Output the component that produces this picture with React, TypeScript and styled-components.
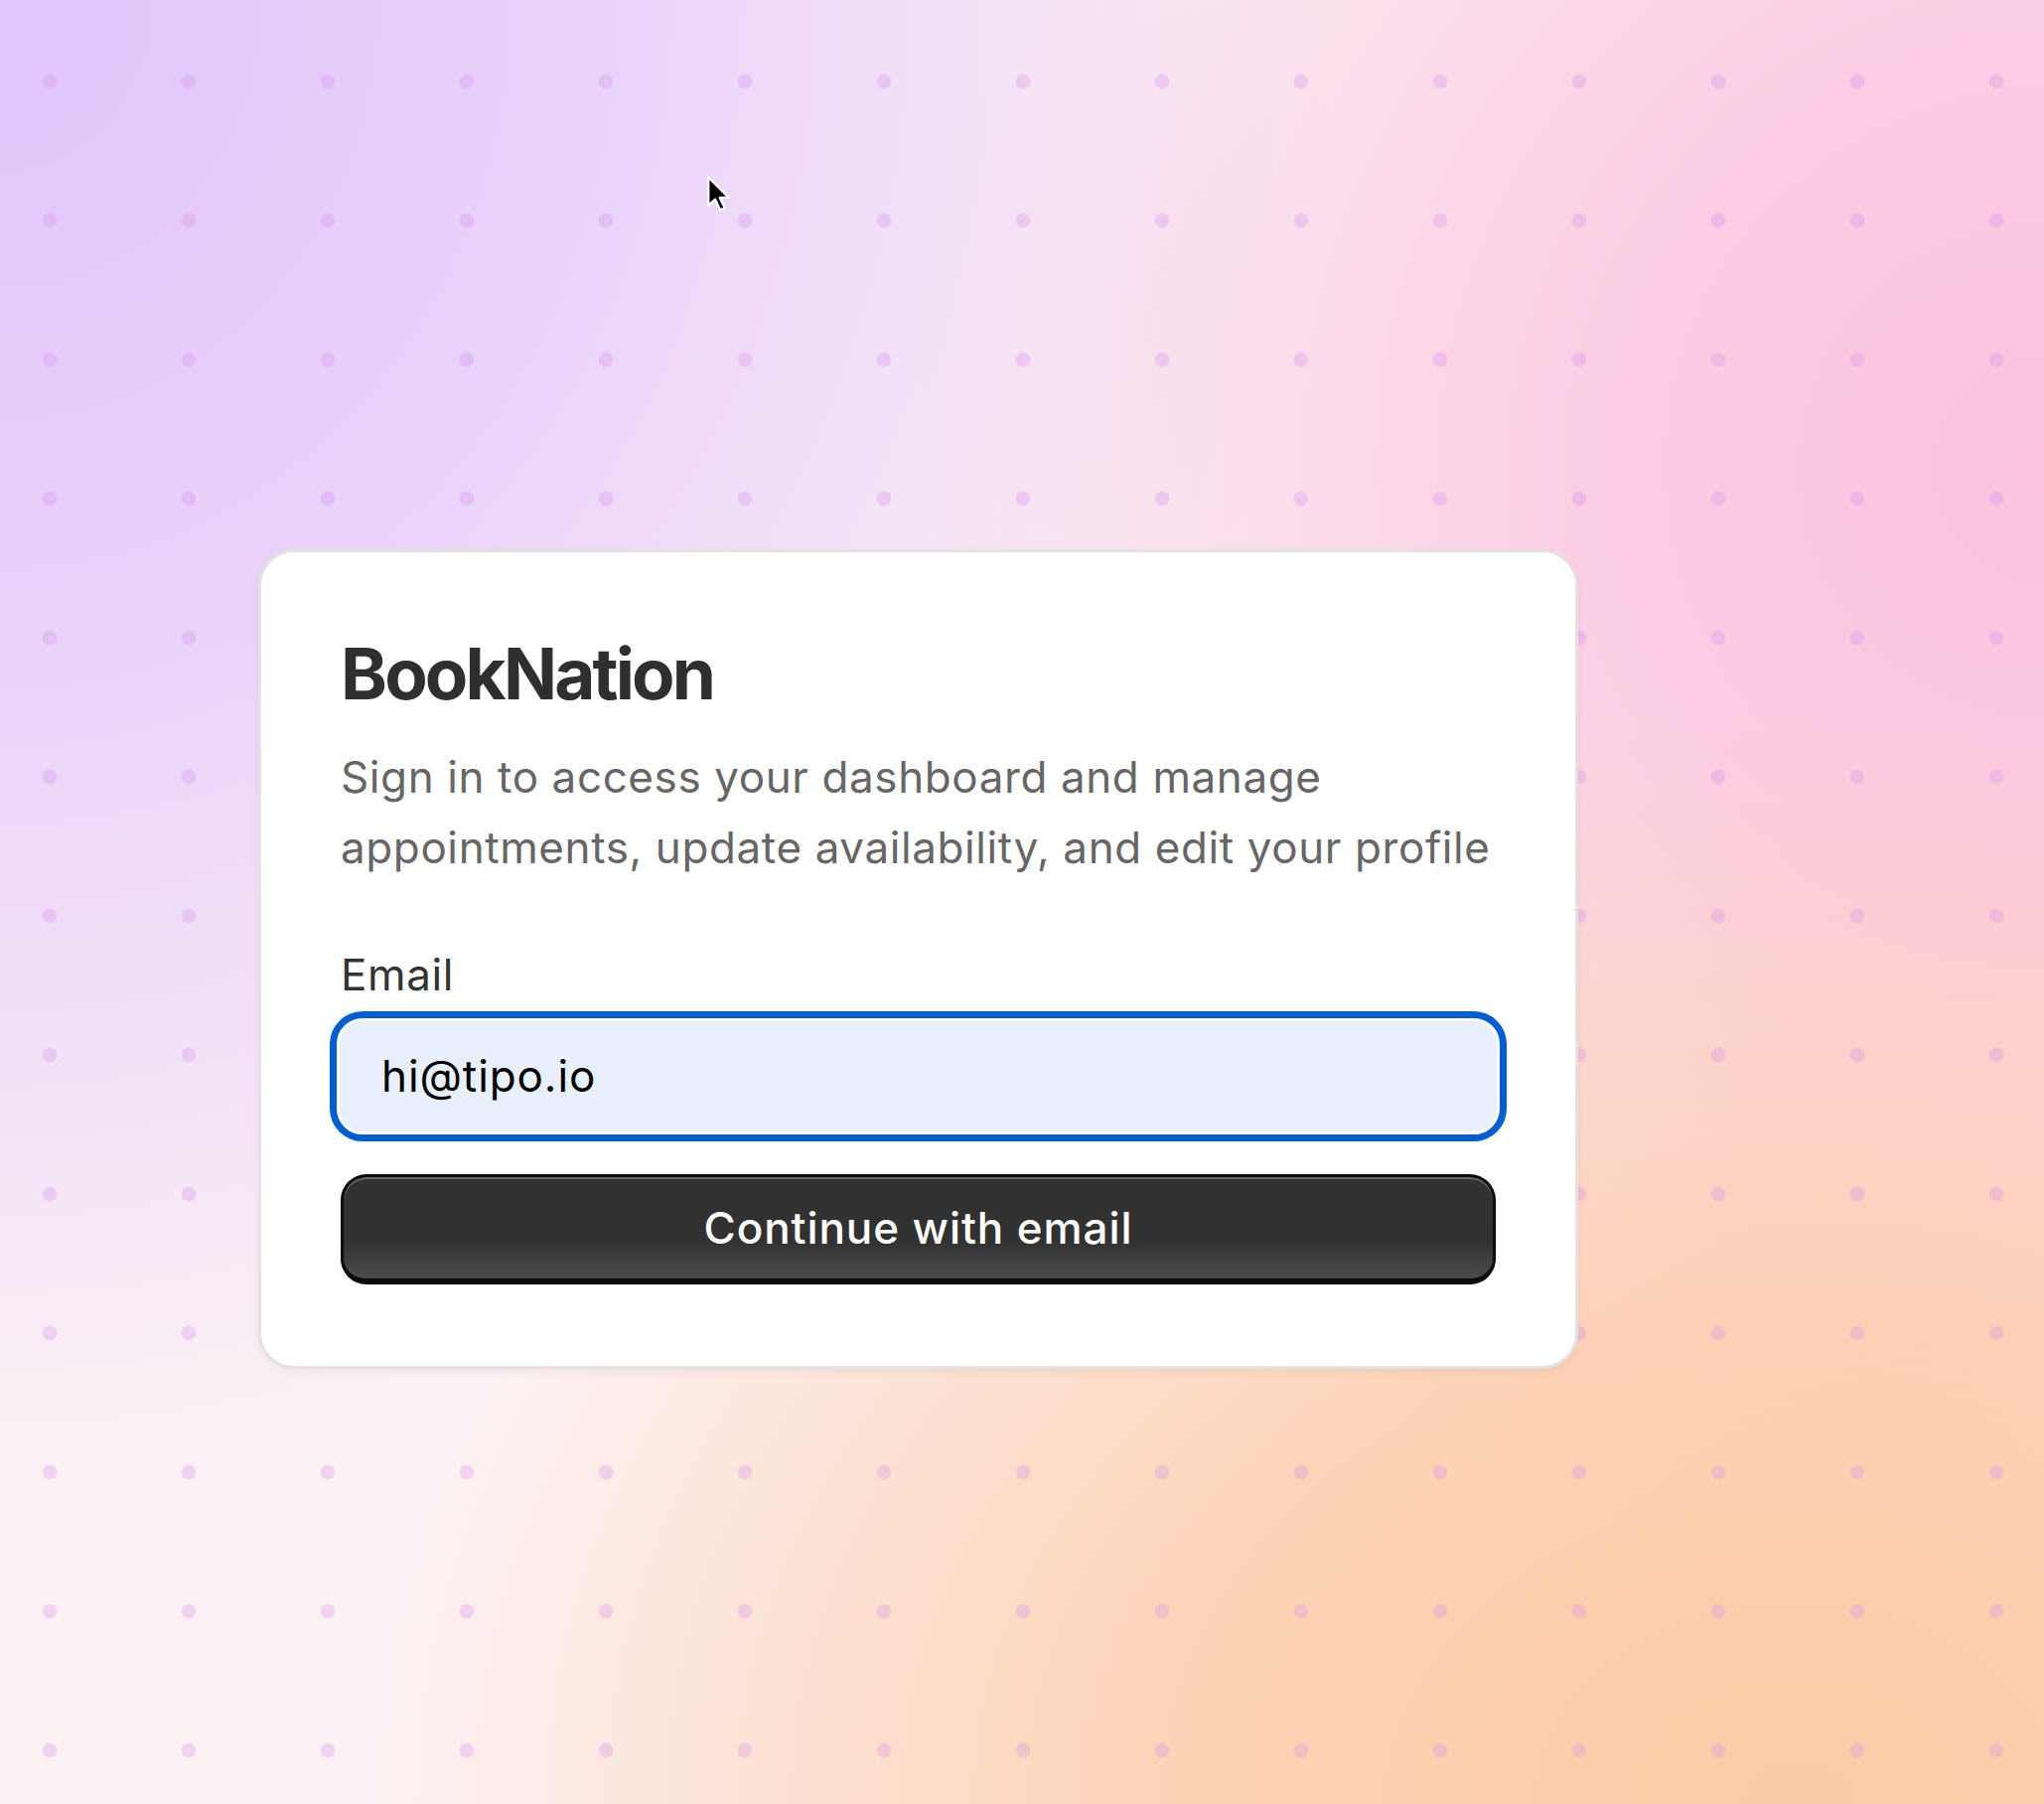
import styled, { createGlobalStyle } from 'styled-components'

const GlobalStyle = createGlobalStyle`
  html, body {
    margin: 0;
    padding: 0;
  }

  body {
    font-family: Inter, "Noto Sans", "Liberation Sans", sans-serif;
    -webkit-font-smoothing: antialiased;
  }
`

const Page = styled.main`
  position: relative;
  box-sizing: border-box;
  min-height: 1816px;
  padding: 553px 0 0 260px;
  overflow: hidden;
  background:
    radial-gradient(circle, rgba(214, 140, 236, 0.3) 7px, rgba(214, 140, 236, 0) 7.6px) -20px 12px / 140px 140px,
    radial-gradient(ellipse 1450px 1100px at 88% 100%, #fdcba6 0%, rgba(253, 204, 168, 0.8) 45%, rgba(253, 204, 168, 0) 100%),
    radial-gradient(ellipse 1150px 1150px at 100% 26%, #fbc3df 0%, rgba(251, 196, 224, 0.8) 40%, rgba(251, 196, 224, 0) 100%),
    radial-gradient(ellipse 1350px 1500px at 0% 0%, #e2c5fd 0%, rgba(228, 200, 252, 0.75) 45%, rgba(228, 200, 252, 0) 100%),
    #fcf2f4;
`

const Cursor = styled.svg`
  position: absolute;
  left: 711px;
  top: 176px;
  width: 25px;
  height: 39px;
`

const Card = styled.section`
  box-sizing: border-box;
  width: 1329px;
  padding: 80px 80px 82px;
  background: #fff;
  border: 3px solid #e2e2e2;
  border-radius: 36px;
  box-shadow: 0 3px 8px rgba(0, 0, 0, 0.05);
`

const Title = styled.h1`
  margin: 0;
  font-size: 71px;
  font-weight: 700;
  line-height: 1.2;
  letter-spacing: -0.04em;
  color: #2f2f2f;
`

const Description = styled.p`
  margin: 26px 0 0;
  font-size: 44px;
  line-height: 1.6;
  letter-spacing: 0.6px;
  color: #666;
`

const Label = styled.label`
  display: block;
  margin-top: 60px;
  font-size: 44px;
  line-height: 1.5;
  letter-spacing: 0.6px;
  color: #333;
`

const Input = styled.input`
  display: block;
  box-sizing: border-box;
  width: calc(100% + 8px);
  height: 117px;
  margin: 11px -4px 0;
  padding: 0 42px;
  border: 3px solid #fff;
  border-radius: 26px;
  background: #e8f0fe;
  box-shadow: 0 0 0 7px #005ed5;
  outline: none;
  font: inherit;
  font-size: 44px;
  letter-spacing: 0.9px;
  color: #000;
`

const Button = styled.button`
  display: block;
  box-sizing: border-box;
  width: 100%;
  height: 111px;
  margin-top: 40px;
  border: 3px solid #0b0b0b;
  border-bottom-width: 6px;
  border-radius: 26px;
  background: linear-gradient(180deg, #323232 0%, #313131 62%, #4b4b4b 100%);
  box-shadow: inset 0 2px 0 rgba(255, 255, 255, 0.28);
  font: inherit;
  font-size: 44px;
  font-weight: 500;
  letter-spacing: 0.9px;
  color: #fff;
  cursor: pointer;
`

export default function App() {
  return (
    <>
      <GlobalStyle />
      <Page>
        <Cursor viewBox="0 0 22 34">
          <path
            d="M2 2 L2 27 L8 21.5 L12.5 31 L16.5 29.2 L12 20 L20 20 Z"
            fill="#000"
            stroke="#fff"
            strokeWidth="2"
            strokeLinejoin="round"
          />
        </Cursor>

        <Card>
          <Title>BookNation</Title>
          <Description>
            Sign in to access your dashboard and manage appointments, update availability, and edit your profile
          </Description>

          <Label htmlFor="email">Email</Label>
          <Input id="email" type="email" defaultValue="hi@tipo.io" />

          <Button type="button">Continue with email</Button>
        </Card>
      </Page>
    </>
  )
}
